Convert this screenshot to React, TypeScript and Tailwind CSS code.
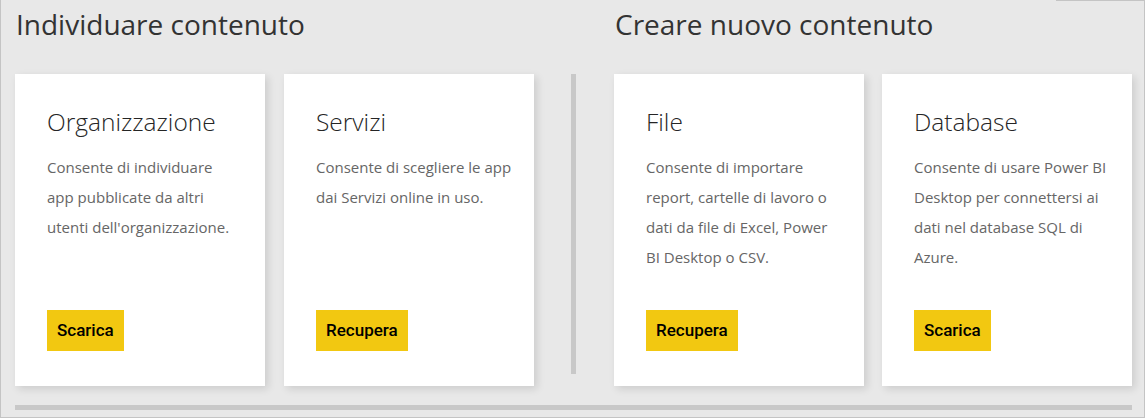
import React from "react";

type Card = {
  title: string;
  text: string;
  action: string;
  pad: string;
};

const findCards: Card[] = [
  {
    title: "Organizzazione",
    text: "Consente di individuare app pubblicate da altri utenti dell'organizzazione.",
    action: "Scarica",
    pad: "pr-[24px]",
  },
  {
    title: "Servizi",
    text: "Consente di scegliere le app dai Servizi online in uso.",
    action: "Recupera",
    pad: "pr-[20px]",
  },
];

const createCards: Card[] = [
  {
    title: "File",
    text: "Consente di importare report, cartelle di lavoro o dati da file di Excel, Power BI Desktop o CSV.",
    action: "Recupera",
    pad: "pr-[24px]",
  },
  {
    title: "Database",
    text: "Consente di usare Power BI Desktop per connettersi ai dati nel database SQL di Azure.",
    action: "Scarica",
    pad: "pr-[24px]",
  },
];

function ContentCard({ card }: { card: Card }) {
  return (
    <div
      className={`w-[250px] h-[312px] bg-white flex flex-col pl-[32px] ${card.pad} pt-[32px] pb-[35px] shadow-[3px_3px_8px_rgba(0,0,0,0.12)]`}
    >
      <h3 className="text-[24.5px] leading-[32px] font-light text-[#252525]">
        {card.title}
      </h3>
      <p className="mt-[14px] text-[15px] leading-[30px] text-[#666666] flex-1">
        {card.text}
      </p>
      <div>
        <button className="h-[41px] px-[10px] bg-[#f2c811] text-black text-[17px] font-medium font-['Roboto',sans-serif]">
          {card.action}
        </button>
      </div>
    </div>
  );
}

function Section({ title, cards, gap }: { title: string; cards: Card[]; gap: string }) {
  return (
    <div className="flex flex-col">
      <h2 className="h-[73px] pt-[5px] pl-[1px] text-[28px] leading-[36px] font-normal text-[#333333]">
        {title}
      </h2>
      <div className={`flex ${gap}`}>
        {cards.map((c) => (
          <ContentCard key={c.title} card={c} />
        ))}
      </div>
    </div>
  );
}

export default function App() {
  return (
    <div className="w-[1145px] h-[418px] bg-[#e8e8e8] border-l border-r border-b border-[#c4c4c4] flex flex-col font-['Open_Sans',sans-serif]">
      <div className="h-px flex justify-end">
        <div className="w-[88px] bg-[#c4c4c4]" />
      </div>
      <div className="flex pl-[14px]">
        <Section title="Individuare contenuto" cards={findCards} gap="gap-[19px]" />
        <div className="w-[5px] h-[300px] mt-[73px] ml-[37px] mr-[38px] bg-[#c8c8c8]" />
        <Section title="Creare nuovo contenuto" cards={createCards} gap="gap-[18px]" />
      </div>
      <div className="mt-[19px] ml-[14px] w-[1117px] h-[5px] bg-[#c8c8c8]" />
    </div>
  );
}
